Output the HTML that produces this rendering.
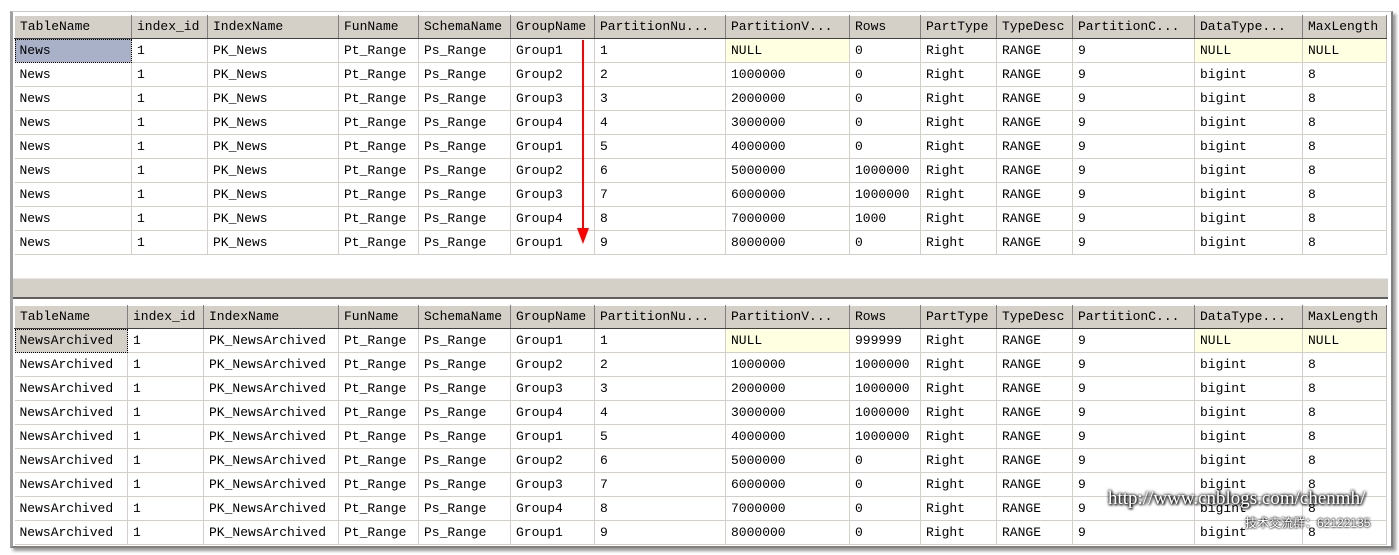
<!DOCTYPE html>
<html><head><meta charset="utf-8">
<style>
body{margin:0;width:1399px;height:555px;background:#fff;position:relative;overflow:hidden;font-family:"Liberation Mono","Noto Sans CJK SC",monospace;font-size:13px;color:#000}
.frame{position:absolute;left:10px;top:11px;width:1378px;height:534px;border-left:3px solid #a0a0a0;border-top:1px solid #c8c8c8;border-right:2px solid #808080;border-bottom:2px solid #808080;box-shadow:3px 3px 3px #999}
table{position:absolute;left:14px;border-collapse:collapse;table-layout:fixed}
td,th{height:23px;padding:0 0 0 5px;border-right:1px solid #d4d0c8;border-bottom:1px solid #d4d0c8;text-align:left;font-weight:normal;white-space:nowrap;overflow:hidden;line-height:23px}
th{background:#d4d0c8;border-top:1px solid #fff;border-left:1px solid #fff;border-right:1px solid #808080;border-bottom:1px solid #404040;height:22px;line-height:22px}
.y{background:#ffffe1}
.sel1{background:#a9b1c9;outline:1px dotted #000;outline-offset:-1px}
.sel2{background:#d4d0c8;outline:1px dotted #000;outline-offset:-1px}
.split{position:absolute;left:13px;width:1375px;top:278px;height:18px;background:#d4d0c8;border-top:1px solid #e8e8e8;border-bottom:2px solid #606060}
.wm{position:absolute;left:1108px;top:488px;font-family:"Liberation Serif",serif;font-size:19px;color:#fff;text-shadow:0 0 3px #000,0 0 3px #000,1px 1px 2px #000}
.wm2{position:absolute;left:1245px;top:514px;font-family:"Liberation Sans","Noto Sans CJK SC",sans-serif;font-size:12px;color:#fff;text-shadow:0 0 2px #000,0 0 2px #000}
</style></head><body>
<div class="frame"></div>
<table style="top:15px">
<colgroup><col style="width:117px"><col style="width:76px"><col style="width:131px"><col style="width:80px"><col style="width:92px"><col style="width:84px"><col style="width:131px"><col style="width:124px"><col style="width:71px"><col style="width:76px"><col style="width:76px"><col style="width:122px"><col style="width:108px"><col style="width:84px"></colgroup>
<tr><th>TableName</th><th>index_id</th><th>IndexName</th><th>FunName</th><th>SchemaName</th><th>GroupName</th><th>PartitionNu...</th><th>PartitionV...</th><th>Rows</th><th>PartType</th><th>TypeDesc</th><th>PartitionC...</th><th>DataType...</th><th>MaxLength</th></tr>
<tr><td class="sel1">News</td><td>1</td><td>PK_News</td><td>Pt_Range</td><td>Ps_Range</td><td>Group1</td><td>1</td><td class="y">NULL</td><td>0</td><td>Right</td><td>RANGE</td><td>9</td><td class="y">NULL</td><td class="y">NULL</td></tr>
<tr><td>News</td><td>1</td><td>PK_News</td><td>Pt_Range</td><td>Ps_Range</td><td>Group2</td><td>2</td><td>1000000</td><td>0</td><td>Right</td><td>RANGE</td><td>9</td><td>bigint</td><td>8</td></tr>
<tr><td>News</td><td>1</td><td>PK_News</td><td>Pt_Range</td><td>Ps_Range</td><td>Group3</td><td>3</td><td>2000000</td><td>0</td><td>Right</td><td>RANGE</td><td>9</td><td>bigint</td><td>8</td></tr>
<tr><td>News</td><td>1</td><td>PK_News</td><td>Pt_Range</td><td>Ps_Range</td><td>Group4</td><td>4</td><td>3000000</td><td>0</td><td>Right</td><td>RANGE</td><td>9</td><td>bigint</td><td>8</td></tr>
<tr><td>News</td><td>1</td><td>PK_News</td><td>Pt_Range</td><td>Ps_Range</td><td>Group1</td><td>5</td><td>4000000</td><td>0</td><td>Right</td><td>RANGE</td><td>9</td><td>bigint</td><td>8</td></tr>
<tr><td>News</td><td>1</td><td>PK_News</td><td>Pt_Range</td><td>Ps_Range</td><td>Group2</td><td>6</td><td>5000000</td><td>1000000</td><td>Right</td><td>RANGE</td><td>9</td><td>bigint</td><td>8</td></tr>
<tr><td>News</td><td>1</td><td>PK_News</td><td>Pt_Range</td><td>Ps_Range</td><td>Group3</td><td>7</td><td>6000000</td><td>1000000</td><td>Right</td><td>RANGE</td><td>9</td><td>bigint</td><td>8</td></tr>
<tr><td>News</td><td>1</td><td>PK_News</td><td>Pt_Range</td><td>Ps_Range</td><td>Group4</td><td>8</td><td>7000000</td><td>1000</td><td>Right</td><td>RANGE</td><td>9</td><td>bigint</td><td>8</td></tr>
<tr><td>News</td><td>1</td><td>PK_News</td><td>Pt_Range</td><td>Ps_Range</td><td>Group1</td><td>9</td><td>8000000</td><td>0</td><td>Right</td><td>RANGE</td><td>9</td><td>bigint</td><td>8</td></tr>
</table>
<div class="split"></div>
<table style="top:305px">
<colgroup><col style="width:113px"><col style="width:76px"><col style="width:135px"><col style="width:80px"><col style="width:92px"><col style="width:84px"><col style="width:131px"><col style="width:124px"><col style="width:71px"><col style="width:76px"><col style="width:76px"><col style="width:122px"><col style="width:108px"><col style="width:84px"></colgroup>
<tr><th>TableName</th><th>index_id</th><th>IndexName</th><th>FunName</th><th>SchemaName</th><th>GroupName</th><th>PartitionNu...</th><th>PartitionV...</th><th>Rows</th><th>PartType</th><th>TypeDesc</th><th>PartitionC...</th><th>DataType...</th><th>MaxLength</th></tr>
<tr><td class="sel2">NewsArchived</td><td>1</td><td>PK_NewsArchived</td><td>Pt_Range</td><td>Ps_Range</td><td>Group1</td><td>1</td><td class="y">NULL</td><td>999999</td><td>Right</td><td>RANGE</td><td>9</td><td class="y">NULL</td><td class="y">NULL</td></tr>
<tr><td>NewsArchived</td><td>1</td><td>PK_NewsArchived</td><td>Pt_Range</td><td>Ps_Range</td><td>Group2</td><td>2</td><td>1000000</td><td>1000000</td><td>Right</td><td>RANGE</td><td>9</td><td>bigint</td><td>8</td></tr>
<tr><td>NewsArchived</td><td>1</td><td>PK_NewsArchived</td><td>Pt_Range</td><td>Ps_Range</td><td>Group3</td><td>3</td><td>2000000</td><td>1000000</td><td>Right</td><td>RANGE</td><td>9</td><td>bigint</td><td>8</td></tr>
<tr><td>NewsArchived</td><td>1</td><td>PK_NewsArchived</td><td>Pt_Range</td><td>Ps_Range</td><td>Group4</td><td>4</td><td>3000000</td><td>1000000</td><td>Right</td><td>RANGE</td><td>9</td><td>bigint</td><td>8</td></tr>
<tr><td>NewsArchived</td><td>1</td><td>PK_NewsArchived</td><td>Pt_Range</td><td>Ps_Range</td><td>Group1</td><td>5</td><td>4000000</td><td>1000000</td><td>Right</td><td>RANGE</td><td>9</td><td>bigint</td><td>8</td></tr>
<tr><td>NewsArchived</td><td>1</td><td>PK_NewsArchived</td><td>Pt_Range</td><td>Ps_Range</td><td>Group2</td><td>6</td><td>5000000</td><td>0</td><td>Right</td><td>RANGE</td><td>9</td><td>bigint</td><td>8</td></tr>
<tr><td>NewsArchived</td><td>1</td><td>PK_NewsArchived</td><td>Pt_Range</td><td>Ps_Range</td><td>Group3</td><td>7</td><td>6000000</td><td>0</td><td>Right</td><td>RANGE</td><td>9</td><td>bigint</td><td>8</td></tr>
<tr><td>NewsArchived</td><td>1</td><td>PK_NewsArchived</td><td>Pt_Range</td><td>Ps_Range</td><td>Group4</td><td>8</td><td>7000000</td><td>0</td><td>Right</td><td>RANGE</td><td>9</td><td>bigint</td><td>8</td></tr>
<tr><td>NewsArchived</td><td>1</td><td>PK_NewsArchived</td><td>Pt_Range</td><td>Ps_Range</td><td>Group1</td><td>9</td><td>8000000</td><td>0</td><td>Right</td><td>RANGE</td><td>9</td><td>bigint</td><td>8</td></tr>
</table>
<svg style="position:absolute;left:574px;top:38px" width="20" height="212">
<line x1="9" y1="2" x2="9" y2="194" stroke="#f00" stroke-width="2"/>
<polygon points="3,190 15,190 9,206" fill="#f00"/>
</svg>
<div class="wm">http://www.cnblogs.com/chenmh/</div>
<div class="wm2">技术交流群：62122135</div>
</body></html>
